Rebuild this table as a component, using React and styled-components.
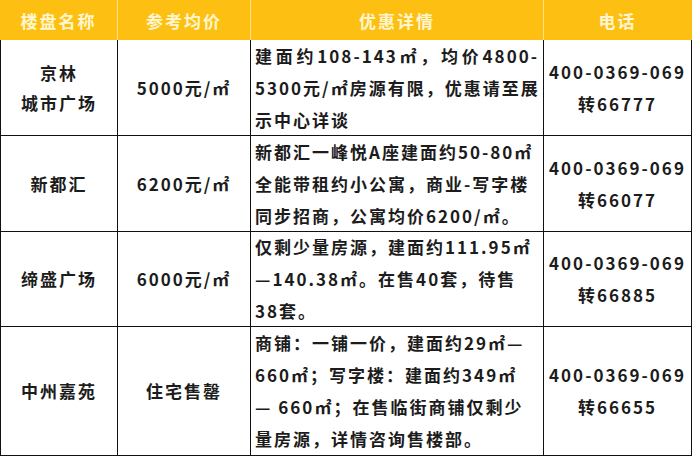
import React from "react";
import styled, { createGlobalStyle } from "styled-components";

const Global = createGlobalStyle`
  html, body { margin: 0; padding: 0; background: #ffffff; }
  body { font-family: "Noto Sans CJK SC", "Noto Sans", sans-serif; }
`;

const Table = styled.div`
  position: relative;
  width: 692px;
  display: grid;
  grid-template-columns: 118px 133px 293px 148px;
  font-weight: 700;
  font-size: 17px;
  letter-spacing: 2px;
  color: #1c1c1c;
`;

const HeadCell = styled.div`
  height: 40px;
  background: #fdc012;
  color: #fff6cf;
  display: flex;
  align-items: center;
  justify-content: center;
  box-sizing: border-box;
  border-right: 1px solid ${(p) => (p.$last ? "transparent" : "#fde08a")};
`;

const Cell = styled.div`
  box-sizing: border-box;
  height: ${(p) => p.$h}px;
  border-right: 1px solid #111;
  border-bottom: 1px solid #111;
  border-left: ${(p) => (p.$first ? "1px solid #111" : "none")};
  display: flex;
  flex-direction: column;
  justify-content: center;
  align-items: ${(p) => (p.$left ? "flex-start" : "center")};
  padding-left: ${(p) => (p.$left ? "4px" : "0")};
  line-height: ${(p) => p.$lh || 32}px;
  text-align: ${(p) => (p.$left ? "left" : "center")};
`;

const Line = styled.span`
  display: block;
  white-space: nowrap;
  width: ${(p) => (p.$w ? `${p.$w}px` : "auto")};
  text-align: ${(p) => (p.$w ? "justify" : "left")};
  text-align-last: ${(p) => (p.$w ? "justify" : "auto")};
`;

const rows = [
  {
    h: 96,
    name: ["京林", "城市广场"],
    price: "5000元/㎡",
    detail: [
      ["建面约108-143㎡，均价4800-", 284],
      ["5300元/㎡房源有限，优惠请至展", 284],
      ["示中心详谈"],
    ],
    tel: "66777",
  },
  {
    h: 96,
    name: ["新都汇"],
    price: "6200元/㎡",
    detail: [
      ["新都汇一峰悦A座建面约50-80㎡"],
      ["全能带租约小公寓，商业-写字楼"],
      ["同步招商，公寓均价6200/㎡。"],
    ],
    tel: "66077",
  },
  {
    h: 95,
    name: ["缔盛广场"],
    price: "6000元/㎡",
    detail: [
      ["仅剩少量房源，建面约111.95㎡"],
      ["—140.38㎡。在售40套，待售"],
      ["38套。"],
    ],
    tel: "66885",
  },
  {
    h: 129,
    name: ["中州嘉苑"],
    price: "住宅售罄",
    detail: [
      ["商铺：一铺一价，建面约29㎡—"],
      ["660㎡；写字楼：建面约349㎡"],
      ["— 660㎡；在售临街商铺仅剩少"],
      ["量房源，详情咨询售楼部。"],
    ],
    tel: "66655",
  },
];

export default function App() {
  return (
    <>
      <Global />
      <Table>
        <HeadCell>楼盘名称</HeadCell>
        <HeadCell>参考均价</HeadCell>
        <HeadCell>优惠详情</HeadCell>
        <HeadCell $last>电话</HeadCell>
        {rows.map((r, i) => (
          <React.Fragment key={i}>
            <Cell $h={r.h} $first $lh={30}>
              {r.name.map((n) => (
                <Line key={n}>{n}</Line>
              ))}
            </Cell>
            <Cell $h={r.h}>{r.price}</Cell>
            <Cell $h={r.h} $left>
              {r.detail.map(([t, w]) => (
                <Line key={t} $w={w}>
                  {t}
                </Line>
              ))}
            </Cell>
            <Cell $h={r.h}>
              <Line>400-0369-069</Line>
              <Line>转{r.tel}</Line>
            </Cell>
          </React.Fragment>
        ))}
      </Table>
    </>
  );
}
